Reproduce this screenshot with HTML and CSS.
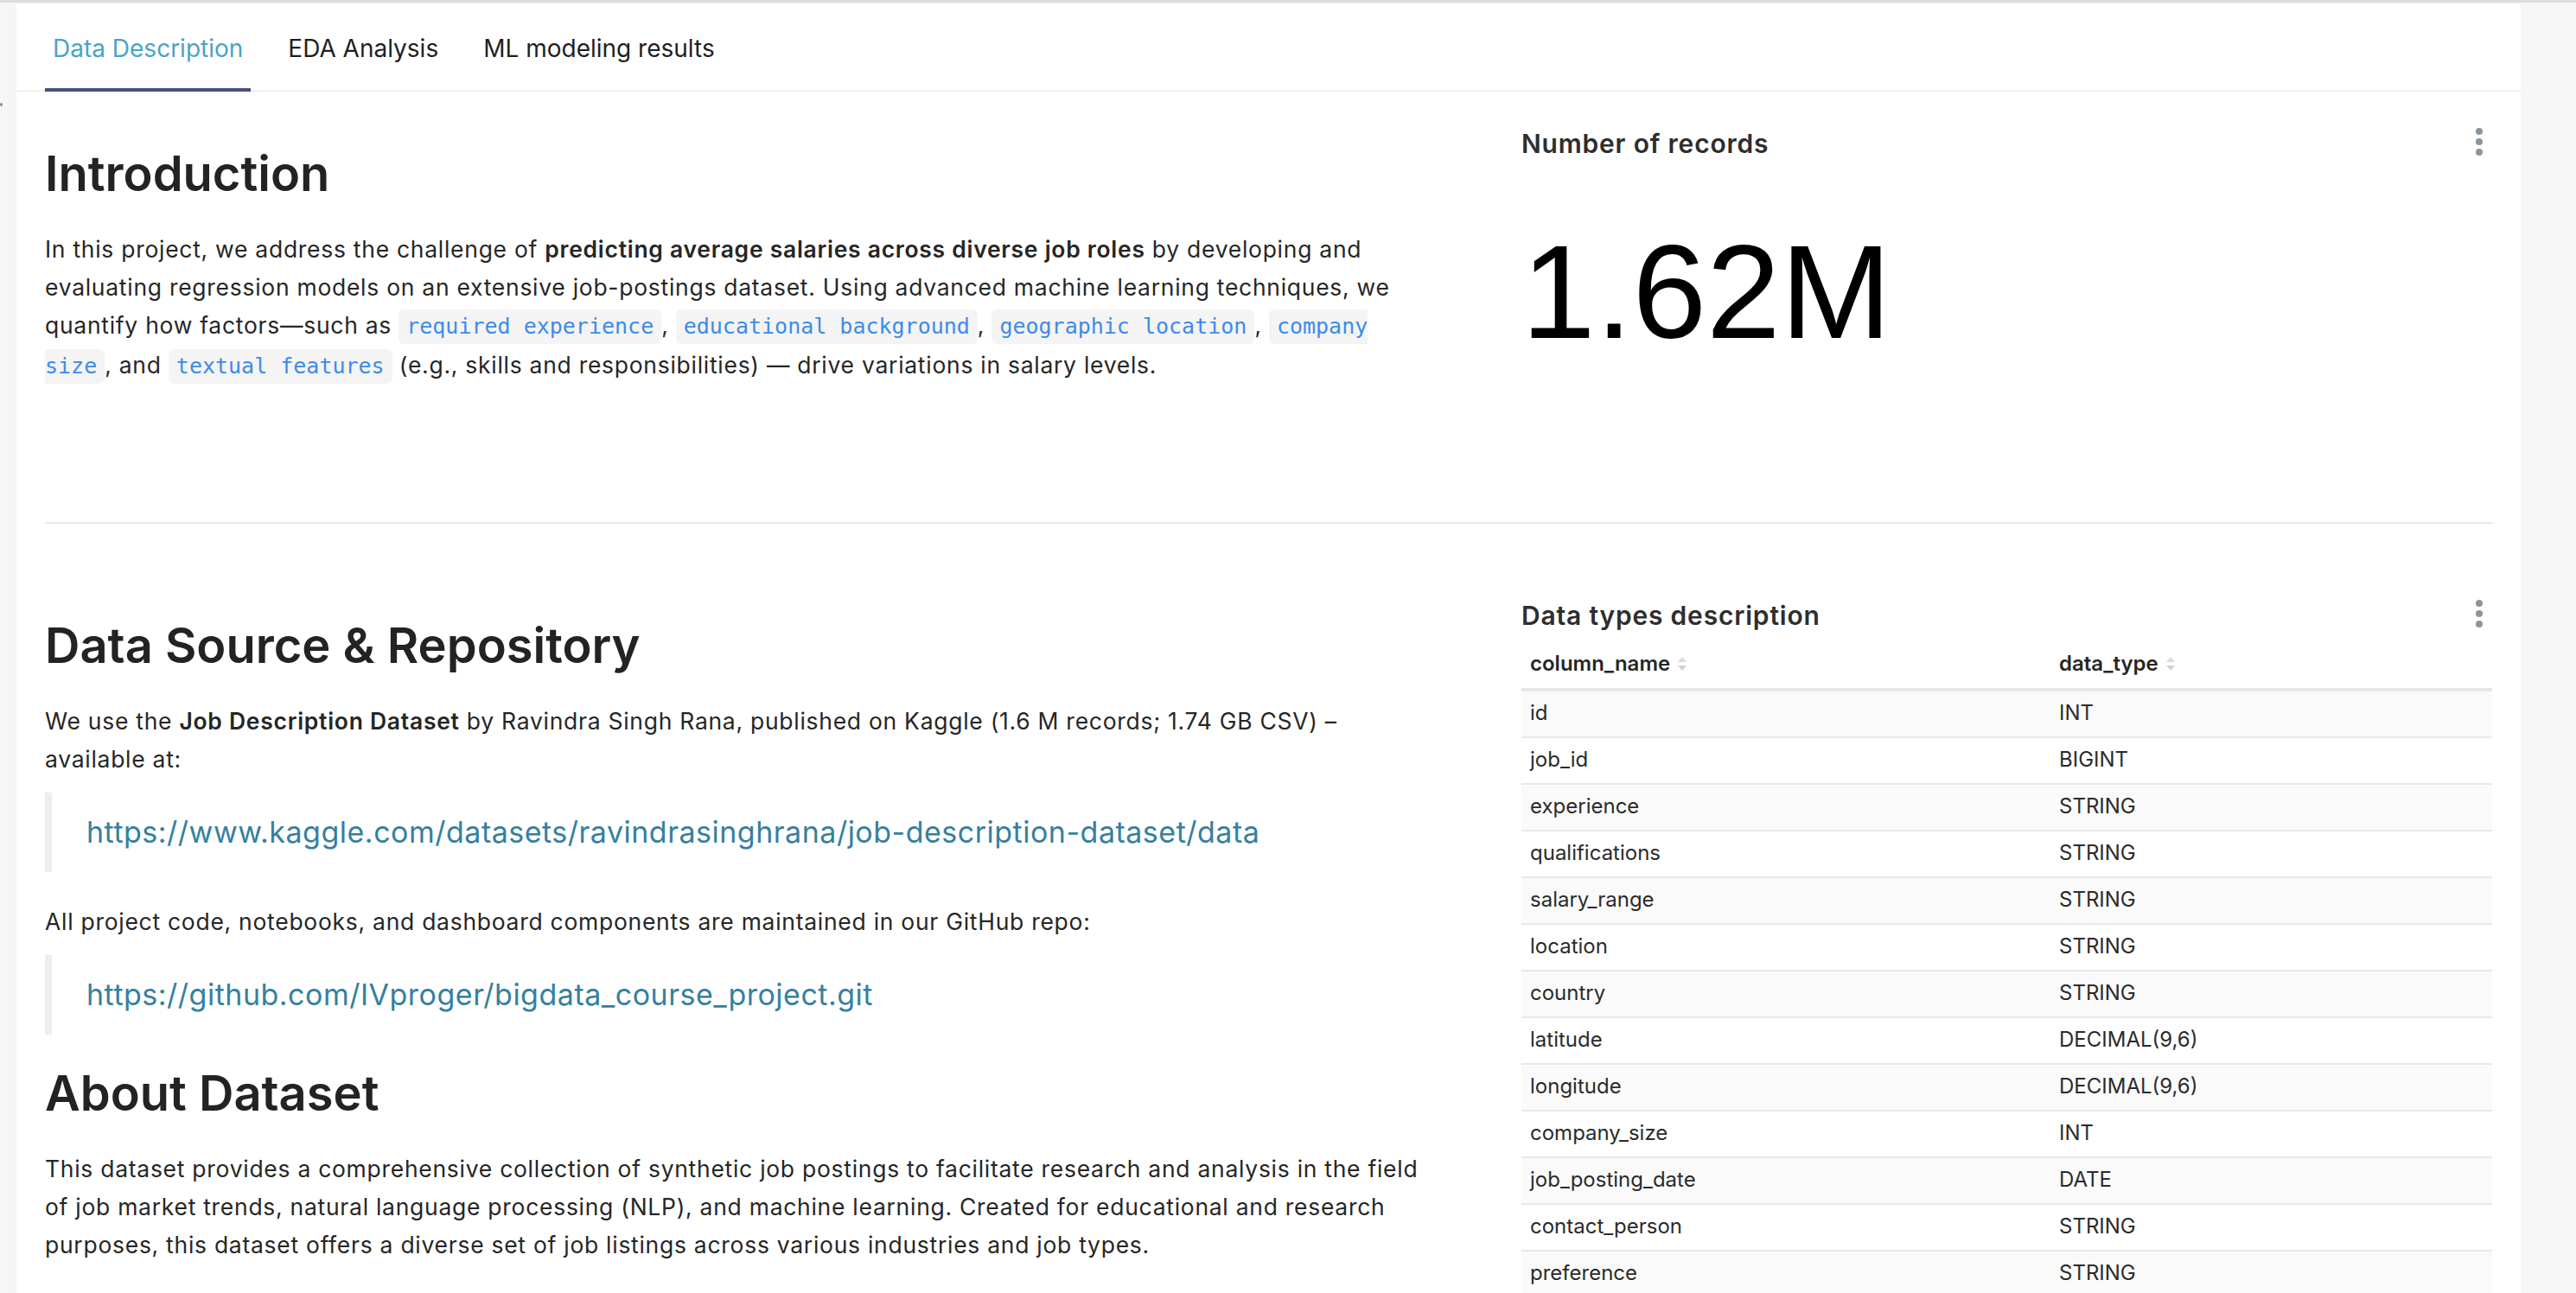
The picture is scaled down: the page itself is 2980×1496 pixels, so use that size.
FILE: index.html
```html
<!DOCTYPE html>
<html lang="en">
<head>
<meta charset="utf-8">
<title>Dashboard - Data Description</title>
<link rel="stylesheet" href="styles.css">
</head>
<body>
<div class="edge-dot"></div>
<div class="page">
  <div class="canvas">
    <nav class="tabs">
      <div class="tab active">Data Description</div>
      <div class="tab">EDA Analysis</div>
      <div class="tab">ML modeling results</div>
    </nav>
    <main class="content">
      <section class="row row-1">
        <div class="md md-first">
          <h1>Introduction</h1>
          <p>In this project, we address the challenge of <strong>predicting average salaries across diverse job roles</strong> by developing and evaluating regression models on an extensive job-postings dataset. Using advanced machine learning techniques, we quantify how factors—such as <code>required experience</code>, <code>educational background</code>, <code>geographic location</code>, <code>company size</code>, and <code>textual features</code> (e.g., skills and responsibilities) — drive variations in salary levels.</p>
        </div>
        <div class="widget counter-widget">
          <div class="widget-head">
            <div class="widget-title">Number of records</div>
            <div class="kebab"><span></span><span></span><span></span></div>
          </div>
          <div class="counter">1.62M</div>
        </div>
      </section>
      <div class="divider"></div>
      <section class="row row-2">
        <div class="md md-second">
          <h1>Data Source &amp; Repository</h1>
          <p>We use the <strong>Job Description Dataset</strong> by Ravindra Singh Rana, published on Kaggle (1.6 M records; 1.74 GB CSV) – available at:</p>
          <blockquote><a href="#">https://www.kaggle.com/datasets/ravindrasinghrana/job-description-dataset/data</a></blockquote>
          <p>All project code, notebooks, and dashboard components are maintained in our GitHub repo:</p>
          <blockquote><a href="#">https://github.com/IVproger/bigdata_course_project.git</a></blockquote>
          <h1>About Dataset</h1>
          <p>This dataset provides a comprehensive collection of synthetic job postings to facilitate research and analysis in the field of job market trends, natural language processing (NLP), and machine learning. Created for educational and research purposes, this dataset offers a diverse set of job listings across various industries and job types.</p>
        </div>
        <div class="widget table-widget">
          <div class="widget-head">
            <div class="widget-title">Data types description</div>
            <div class="kebab"><span></span><span></span><span></span></div>
          </div>
          <table class="types">
            <colgroup><col class="col-name"><col></colgroup>
            <thead>
              <tr>
                <th>column_name<svg class="sort" viewBox="0 0 12 20" width="12" height="20"><path d="M1 8 L6 2 L11 8 Z" fill="#dcdcdc"/><path d="M1 12 L6 18 L11 12 Z" fill="#d2d2d2"/></svg></th>
                <th>data_type<svg class="sort" viewBox="0 0 12 20" width="12" height="20"><path d="M1 8 L6 2 L11 8 Z" fill="#dcdcdc"/><path d="M1 12 L6 18 L11 12 Z" fill="#d2d2d2"/></svg></th>
              </tr>
            </thead>
            <tbody>
              <tr><td>id</td><td>INT</td></tr>
              <tr><td>job_id</td><td>BIGINT</td></tr>
              <tr><td>experience</td><td>STRING</td></tr>
              <tr><td>qualifications</td><td>STRING</td></tr>
              <tr><td>salary_range</td><td>STRING</td></tr>
              <tr><td>location</td><td>STRING</td></tr>
              <tr><td>country</td><td>STRING</td></tr>
              <tr><td>latitude</td><td>DECIMAL(9,6)</td></tr>
              <tr><td>longitude</td><td>DECIMAL(9,6)</td></tr>
              <tr><td>company_size</td><td>INT</td></tr>
              <tr><td>job_posting_date</td><td>DATE</td></tr>
              <tr><td>contact_person</td><td>STRING</td></tr>
              <tr><td>preference</td><td>STRING</td></tr>
              <tr><td>job_title</td><td>STRING</td></tr>
            </tbody>
          </table>
        </div>
      </section>
    </main>
  </div>
</div>
</body>
</html>
```
FILE: styles.css
```css
html, body {
  margin: 0;
  height: 100%;
  overflow: hidden;
  background: #f6f6f6;
}
body {
  font-family: Inter, "Noto Sans", sans-serif;
  color: #262626;
  position: relative;
}
.edge-dot {
  position: absolute;
  left: 0;
  top: 119px;
  width: 3px;
  height: 4px;
  border-radius: 50%;
  background: #8a8a8a;
}
.page {
  border-top: 3px solid #dddddd;
  padding: 2px 64px 0 19px;
}
.canvas {
  background: #ffffff;
  min-height: 1600px;
}
.tabs {
  display: flex;
  gap: 34px;
  height: 99px;
  padding-left: 33px;
  border-bottom: 2px solid #f0f0f0;
}
.tab {
  box-sizing: border-box;
  height: 101px;
  margin-bottom: -2px;
  padding: 4px 9px 0;
  display: flex;
  align-items: center;
  font-size: 28px;
  line-height: 40px;
  color: #1f1f1f;
  border-bottom: 4px solid transparent;
}
.tab.active {
  color: #48a4c9;
  border-bottom-color: #474f7b;
}
.content {
  padding: 0 33px;
}
.row {
  display: grid;
  grid-template-columns: 1596px 1fr;
  column-gap: 112px;
}
.row-1 {
  height: 498px;
}
.divider {
  height: 2px;
  background: #e7e7e7;
}
.md h1 {
  font-size: 56px;
  line-height: 67px;
  font-weight: 600;
  color: #232323;
  margin: 8px 0 31px;
}
.md h1:first-child {
  margin-top: 0;
}
.md p {
  font-size: 26.5px;
  letter-spacing: 0.72px;
  line-height: 44px;
  margin: 0 0 16.5px;
}
.md strong {
  font-weight: 600;
}
.md code {
  font-family: "DejaVu Sans Mono", "Liberation Mono", monospace;
  font-size: 25px;
  letter-spacing: 0;
  color: #3d8bea;
  background: #f4f4f4;
  border-radius: 6px;
  padding: 5px 9px 6px;
}
.md blockquote {
  margin: 0 0 35.5px;
  padding: 24px 0 24px 40px;
  border-left: 8px solid #ededed;
  font-size: 34px;
  letter-spacing: 0.5px;
  line-height: 44px;
}
.md blockquote a {
  color: #35809f;
  text-decoration: none;
}
.md-first {
  padding-top: 62px;
}
.md-second {
  padding-top: 108px;
}
.counter-widget {
  padding-top: 40px;
}
.table-widget {
  padding-top: 86px;
}
.widget-head {
  display: flex;
  justify-content: space-between;
  align-items: flex-start;
}
.widget-title {
  font-size: 30px;
  letter-spacing: 0.8px;
  line-height: 40px;
  font-weight: 600;
  color: #2e2e2e;
}
.kebab {
  display: flex;
  flex-direction: column;
  gap: 4px;
  margin: 2px 11px 0 0;
}
.kebab span {
  width: 8px;
  height: 8px;
  border-radius: 50%;
  background: #8b959b;
}
.counter {
  margin-top: 74px;
  font-family: "Liberation Sans", Arial, sans-serif;
  font-size: 154px;
  line-height: 156px;
  color: #000000;
}
.types {
  width: 100%;
  border-collapse: collapse;
  font-size: 24px;
  line-height: 44px;
  color: #2b2b2b;
}
.col-name {
  width: 612px;
}
.types th {
  text-align: left;
  font-weight: 600;
  color: #262626;
  padding: 14px 10px 6px;
  border-bottom: 4px solid #e6e6e6;
  white-space: nowrap;
}
.sort {
  vertical-align: -2px;
  margin-left: 8px;
}
.types td {
  padding: 3px 10px 5px;
  border-bottom: 2px solid #e8e8e8;
}
.types tbody tr:nth-child(odd) td {
  background: #fafafa;
}
```
